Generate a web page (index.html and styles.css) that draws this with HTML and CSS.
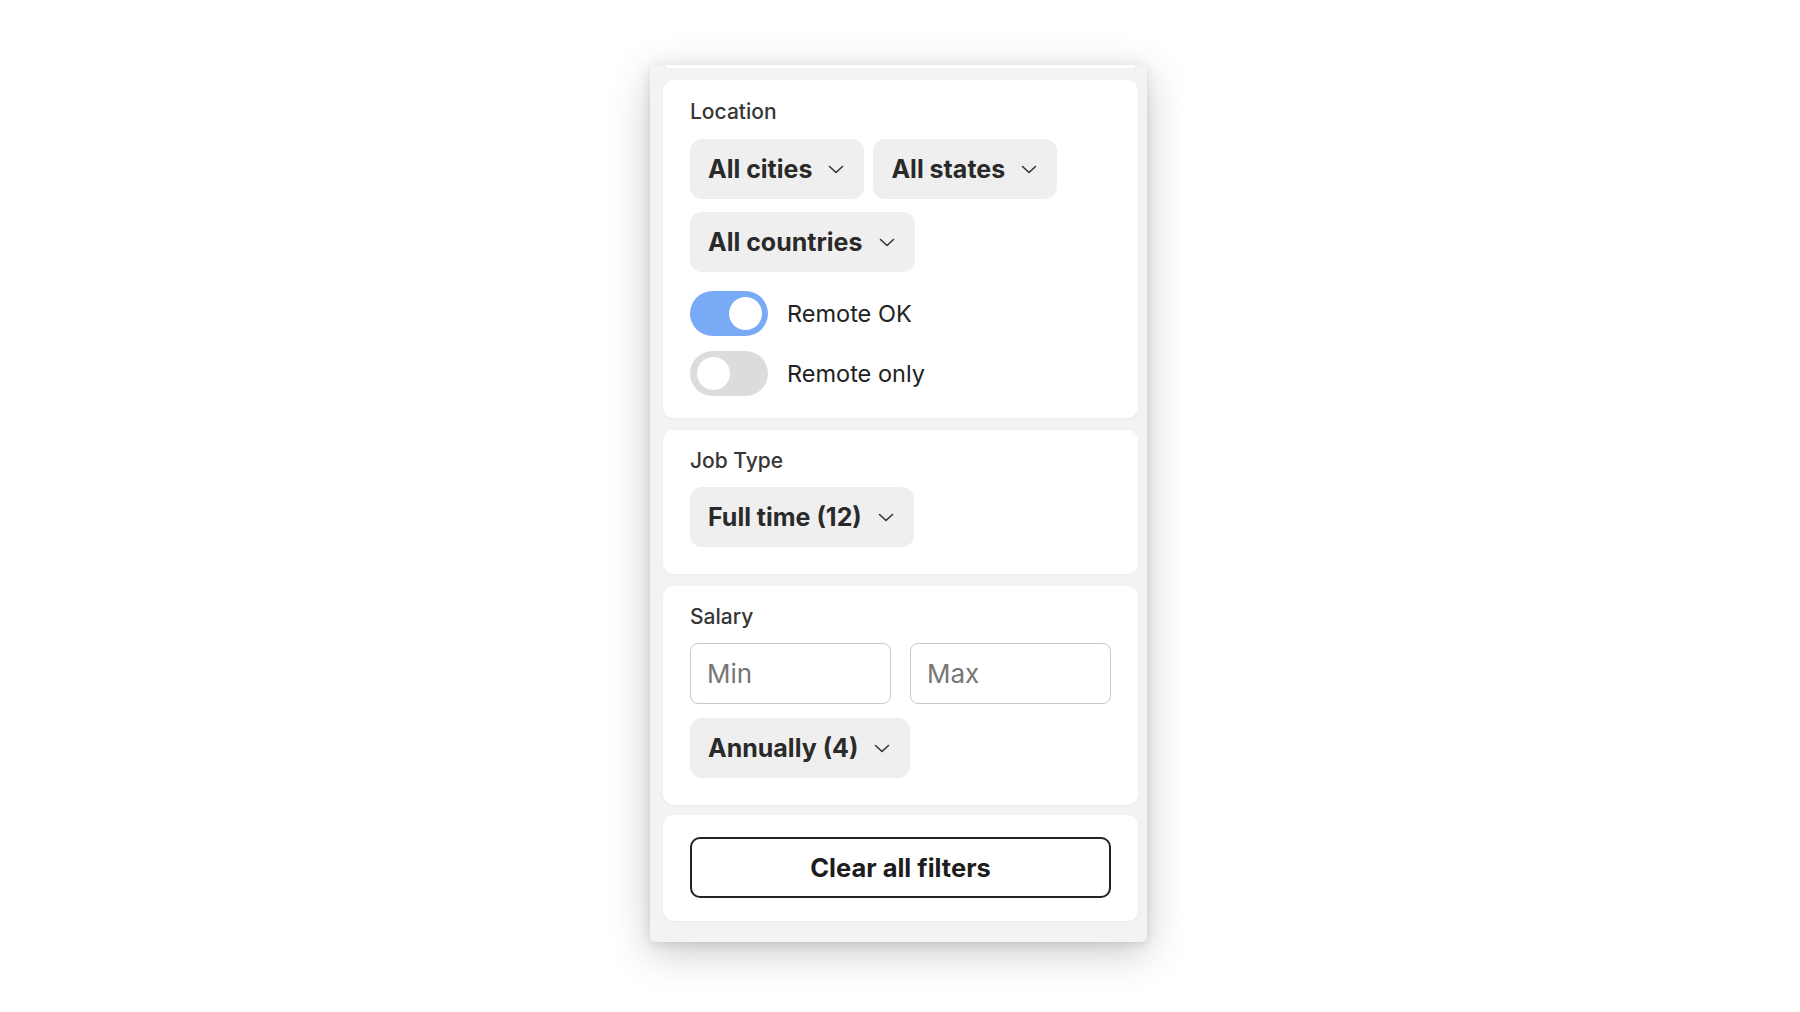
FILE: index.html
```html
<!DOCTYPE html>
<html lang="en">
<head>
<meta charset="UTF-8">
<meta name="viewport" content="width=device-width, initial-scale=1.0">
<title>Job Filters</title>
<link rel="stylesheet" href="styles.css">
</head>
<body>
<div class="filters">
    <div class="card-stub"></div>

    <div class="card card-location">
        <div class="label">Location</div>
        <div class="select-row">
            <button class="select">All cities <svg class="chev" viewBox="0 0 16 9"><polyline points="1.5,1.5 8,7.5 14.5,1.5"/></svg></button>
            <button class="select">All states <svg class="chev" viewBox="0 0 16 9"><polyline points="1.5,1.5 8,7.5 14.5,1.5"/></svg></button>
            <button class="select">All countries <svg class="chev" viewBox="0 0 16 9"><polyline points="1.5,1.5 8,7.5 14.5,1.5"/></svg></button>
        </div>
        <div class="toggles">
            <label class="toggle-row">
                <span class="toggle on"><span class="knob"></span></span>
                Remote OK
            </label>
            <label class="toggle-row">
                <span class="toggle"><span class="knob"></span></span>
                Remote only
            </label>
        </div>
    </div>

    <div class="card">
        <div class="label">Job Type</div>
        <div class="select-row">
            <button class="select">Full time (12) <svg class="chev" viewBox="0 0 16 9"><polyline points="1.5,1.5 8,7.5 14.5,1.5"/></svg></button>
        </div>
    </div>

    <div class="card">
        <div class="label">Salary</div>
        <div class="salary-inputs">
            <input type="text" placeholder="Min">
            <input type="text" placeholder="Max">
        </div>
        <div class="select-row">
            <button class="select">Annually (4) <svg class="chev" viewBox="0 0 16 9"><polyline points="1.5,1.5 8,7.5 14.5,1.5"/></svg></button>
        </div>
    </div>

    <div class="card card-actions">
        <button class="clear-btn">Clear all filters</button>
    </div>
</div>
</body>
</html>
```

FILE: styles.css
```css
body {
    margin: 0;
    padding: 65px 3px 0 0;
    height: 100vh;
    box-sizing: border-box;
    display: flex;
    justify-content: center;
    align-items: flex-start;
    background: #fff;
    font-family: 'Inter', 'Noto Sans', sans-serif;
    color: #2b2b2b;
}

.filters {
    width: 497px;
    box-sizing: border-box;
    padding: 0 9px 21px 13px;
    background: #f3f3f3;
    border-radius: 0 0 5px 5px;
    box-shadow: 0 10px 40px rgba(0, 0, 0, 0.22), 0 2px 10px rgba(0, 0, 0, 0.1);
    display: flex;
    flex-direction: column;
    gap: 12px;
}

.card-stub {
    height: 3px;
    margin: 0 3px;
    background: #fff;
    border-radius: 0 0 4px 4px;
}

.card {
    background: #fff;
    border-radius: 11px;
    padding: 19px 27px 27px;
    box-shadow: 0 1px 3px rgba(0, 0, 0, 0.04);
}

.card-location {
    padding-top: 20px;
    padding-bottom: 22px;
}

.card-actions {
    margin-top: -2px;
    padding: 22px 27px 23px;
}

.label {
    font-size: 21px;
    font-weight: 500;
    line-height: 24px;
    color: #363636;
    margin-bottom: 14px;
}

.card-location .label {
    margin-bottom: 15px;
}

.select-row {
    display: flex;
    flex-wrap: wrap;
    gap: 13px 9px;
}

.select {
    height: 60px;
    display: inline-flex;
    align-items: center;
    gap: 16px;
    padding: 0 20px 0 18px;
    border: none;
    border-radius: 12px;
    background: #efefef;
    font-family: inherit;
    font-size: 25px;
    font-weight: 700;
    color: #2a2a2a;
    cursor: pointer;
}

.chev {
    width: 16px;
    height: 9px;
    fill: none;
    stroke: #333;
    stroke-width: 1.6;
    stroke-linecap: round;
    stroke-linejoin: round;
}

.toggles {
    margin-top: 19px;
    display: flex;
    flex-direction: column;
    gap: 15px;
}

.toggle-row {
    display: flex;
    align-items: center;
    gap: 19px;
    font-size: 23.5px;
    color: #222;
    height: 45px;
}

.toggle {
    width: 78px;
    height: 45px;
    border-radius: 23px;
    background: #dcdcdc;
    box-sizing: border-box;
    padding: 6px 7px;
    display: flex;
}

.toggle.on {
    background: #78aaf6;
    justify-content: flex-end;
    padding: 6px;
}

.knob {
    width: 33px;
    height: 33px;
    border-radius: 50%;
    background: #fff;
}

.salary-inputs {
    display: flex;
    gap: 19px;
    margin-bottom: 14px;
}

.salary-inputs input {
    width: 201px;
    height: 61px;
    box-sizing: border-box;
    border: 1.5px solid #c9c9c9;
    border-radius: 8px;
    padding: 0 16px;
    font-family: inherit;
    font-size: 26px;
    color: #333;
    outline: none;
}

.salary-inputs input::placeholder {
    color: #767676;
}

.clear-btn {
    width: 100%;
    height: 61px;
    border: 2px solid #222;
    border-radius: 10px;
    background: #fff;
    font-family: inherit;
    font-size: 25.5px;
    font-weight: 700;
    color: #1d1d1d;
    cursor: pointer;
}
```
